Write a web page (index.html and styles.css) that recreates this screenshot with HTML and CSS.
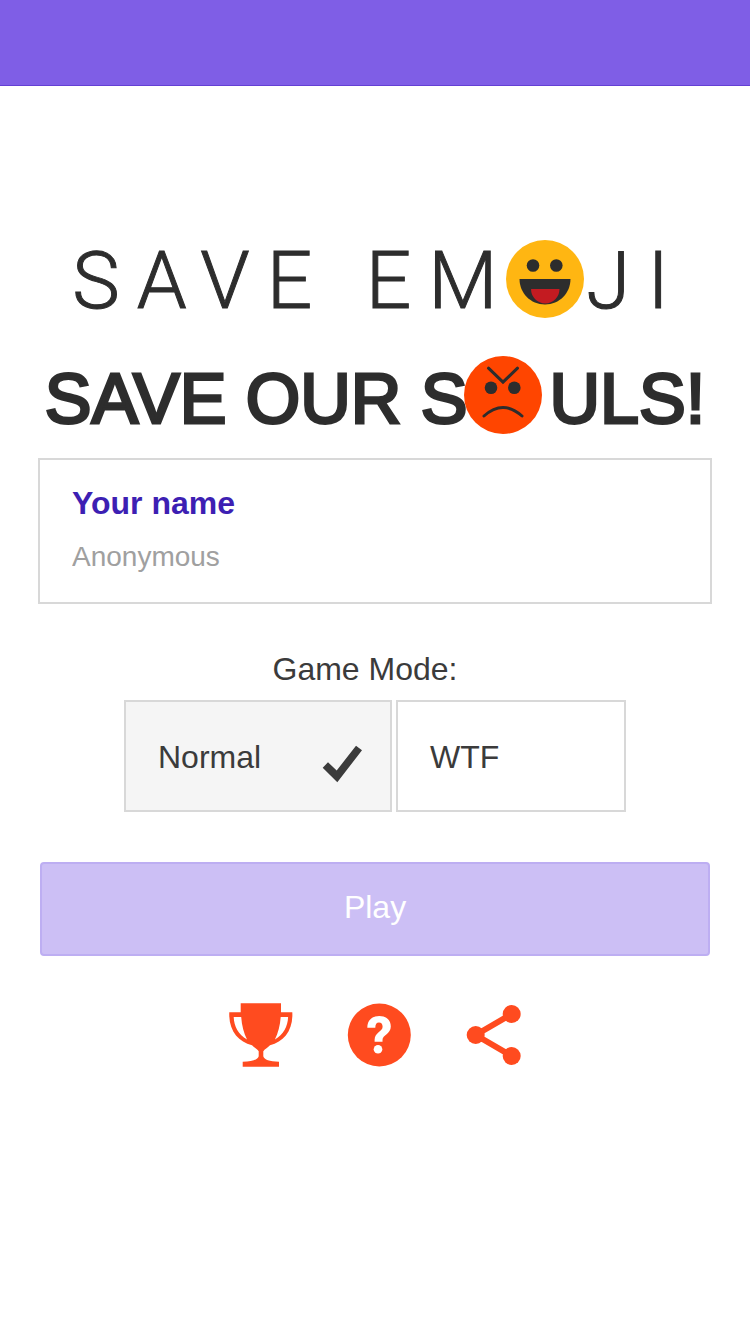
FILE: index.html
```html
<!DOCTYPE html>
<html lang="en">
<head>
<meta charset="utf-8">
<meta name="viewport" content="width=device-width, initial-scale=1">
<title>Save Emoji</title>
<link rel="stylesheet" href="styles.css">
</head>
<body>
<header class="bar"></header>
<main class="page">
  <h1 class="title">
    <span class="word">SAVE EM</span>
    <svg class="face" viewBox="0 0 78 78" role="img" aria-label="O">
      <circle cx="39" cy="39" r="39" fill="#ffb612"/>
      <circle cx="27" cy="25.500" r="6.300" fill="#2d2d2d"/>
      <circle cx="50.300" cy="25.500" r="6.300" fill="#2d2d2d"/>
      <path d="M13.500 39h51c0 14-11 25.500-25.500 25.500S13.500 53 13.500 39z" fill="#2d2d2d"/>
      <path d="M25 49h28.500c0 8-6.300 14.500-14.200 14.500S25 57 25 49z" fill="#c41b21"/>
    </svg>
    <span class="word">JI</span>
  </h1>
  <h2 class="subtitle">
    <span class="word">SAVE OUR S</span>
    <svg class="face" viewBox="0 0 78 78" role="img" aria-label="O">
      <circle cx="39" cy="39" r="39" fill="#ff4500"/>
      <circle cx="27" cy="31.700" r="6.300" fill="#2d2d2d"/>
      <circle cx="50.300" cy="31.700" r="6.300" fill="#2d2d2d"/>
      <g fill="none" stroke="#2d2d2d" stroke-width="3" stroke-linecap="round">
        <path d="M24.500 12.200l14.500 14 14.500-14"/>
        <path d="M20 60q19-17 38 0"/>
      </g>
    </svg>
    <span class="word">ULS!</span>
  </h2>

  <form class="form">
    <div class="field">
      <label class="field-label" for="name">Your name</label>
      <input class="field-input" id="name" type="text" placeholder="Anonymous">
    </div>

    <fieldset class="modes">
      <legend class="modes-title">Game Mode:</legend>
      <div class="options">
        <label class="option">
          <input class="radio" type="radio" name="mode" value="normal" checked>
          <span>Normal</span>
          <svg class="check" viewBox="0 0 40 40" aria-hidden="true"><path d="M.7 23.700L6 18.200l8.700 8.300L34 1.700l6 4.600L15.300 38.200z" fill="#3b3b3b"/></svg>
        </label>
        <label class="option">
          <input class="radio" type="radio" name="mode" value="wtf">
          <span>WTF</span>
          <svg class="check" viewBox="0 0 40 40" aria-hidden="true"><path d="M.7 23.700L6 18.200l8.700 8.300L34 1.700l6 4.600L15.300 38.200z" fill="#3b3b3b"/></svg>
        </label>
      </div>
    </fieldset>

    <button class="play" type="submit" disabled>Play</button>
  </form>

  <nav class="actions" aria-label="More">
    <button class="action" type="button" aria-label="Leaderboard">
      <svg viewBox="0 0 64 64" width="64" height="64" fill="#ff4b1f">
        <path fill-rule="evenodd" d="M11.700 .3h40.300v9H63.300c1 18-8.500 29.500-22.300 33-2 2.200-5 3.500-6.700 6v5c1 3.500 6 5.200 15.700 5.500v4.900H13.700v-4.900c9.700-.3 15-2 16-5.500v-5c-1.700-2.500-4.700-3.800-6.700-6C9.200 38.800-.6 27.300.3 9.300h11.400zM4.700 14c.3 9.500 4.800 17.500 13.300 22.500-3.200-6.500-5.200-14-5.800-22.500zm54.400 0h-7.400c-.6 8.500-2.600 16-5.800 22.500C54.400 31.500 58.800 23.500 59.100 14z"/>
      </svg>
    </button>
    <button class="action" type="button" aria-label="Help">
      <svg viewBox="0 0 64 64" width="64" height="64">
        <circle cx="32.300" cy="32" r="31.500" fill="#ff4b1f"/>
        <path d="M20.300 24.700C20.300 17.500 24.800 13 32.300 13s11.500 4.300 11.500 10.600c0 7.500-8.300 8.500-8.300 13.400v1.700h-7.900v-2c0-7.500 8-8 8-13 0-2.700-1.300-4.200-3.600-4.200-2.500 0-3.700 1.900-3.700 5.200z" fill="#fff"/>
        <circle cx="31" cy="46.300" r="4.300" fill="#fff"/>
      </svg>
    </button>
    <button class="action" type="button" aria-label="Share">
      <svg viewBox="0 0 56 64" width="56" height="64">
        <path d="M46.700 11L10.700 32l36 21" fill="none" stroke="#ff4b1f" stroke-width="6"/>
        <g fill="#ff4b1f"><circle cx="46.700" cy="11" r="9"/><circle cx="10.700" cy="32" r="9"/><circle cx="46.700" cy="53" r="9"/></g>
      </svg>
    </button>
  </nav>
</main>
</body>
</html>
```

FILE: styles.css
```css
* {
  box-sizing: border-box;
}

body {
  margin: 0;
  background: #fff;
  color: #3b3b3b;
  font-family: "Liberation Sans", Arial, sans-serif;
  font-size: 32px;
  line-height: 36px;
}

.bar {
  height: 86px;
  background: #7f5ee6;
  border-bottom: 1px solid #6440d4;
}

.page {
  padding: 152px 38px 40px;
}

.title,
.subtitle {
  display: flex;
  justify-content: center;
  align-items: center;
  margin: 0;
  color: #2d2d2d;
  line-height: 78px;
  white-space: nowrap;
}

.title {
  font-family: Roboto, sans-serif;
  font-size: 80px;
  font-weight: 300;
  letter-spacing: 17px;
  -webkit-text-stroke: 1px #2d2d2d;
}

.title .word {
  padding-top: 4px;
}

.title .word:last-child {
  margin-right: -8px;
}

.subtitle {
  margin-top: 32px;
  font-size: 70px;
  font-weight: 400;
  -webkit-text-stroke: 3px #2d2d2d;
}

.subtitle .word {
  padding-top: 8px;
}

.face {
  flex: none;
  width: 78px;
  height: 78px;
}

.title .face {
  margin-left: -8px;
  margin-right: 2px;
}

.subtitle .face {
  margin-left: -4px;
  margin-right: 8px;
}

.form {
  margin-top: 20px;
}

.field {
  border: 2px solid #d8d8d8;
  padding: 25px 32px 27px;
}

.field-label {
  display: block;
  color: #3d1fb3;
  font-weight: bold;
}

.field-input {
  display: block;
  width: 100%;
  height: 36px;
  margin-top: 18px;
  padding: 0;
  border: 0;
  outline: 0;
  background: none;
  color: #3b3b3b;
  font: inherit;
  font-size: 28px;
}

.field-input::placeholder {
  color: #a0a0a0;
  opacity: 1;
}

.modes {
  margin: 47px 0 0;
  padding: 0;
  border: 0;
}

.modes-title {
  width: 100%;
  padding: 0 20px 0 0;
  text-align: center;
}

.options {
  display: grid;
  grid-template-columns: 268fr 230fr;
  gap: 4px;
  max-width: 502px;
  margin: 13px auto 0;
}

.option {
  display: flex;
  align-items: center;
  justify-content: space-between;
  height: 112px;
  padding: 2px 28px 0 32px;
  border: 2px solid #d8d8d8;
  cursor: pointer;
}

.option:has(:checked) {
  background: #f5f5f5;
}

.radio {
  position: absolute;
  opacity: 0;
}

.check {
  width: 40px;
  height: 40px;
  margin-top: 14px;
  visibility: hidden;
}

.radio:checked ~ .check {
  visibility: visible;
}

.play {
  display: block;
  width: calc(100% - 4px);
  margin: 50px auto 0;
  padding: 25px 0 29px;
  border: 2px solid #bdaef2;
  border-radius: 4px;
  background: #ccbff5;
  color: #fff;
  font: inherit;
}

.actions {
  display: flex;
  justify-content: center;
  gap: 54px;
  margin-top: 47px;
}

.action {
  display: flex;
  padding: 0;
  border: 0;
  background: none;
  cursor: pointer;
}
```
